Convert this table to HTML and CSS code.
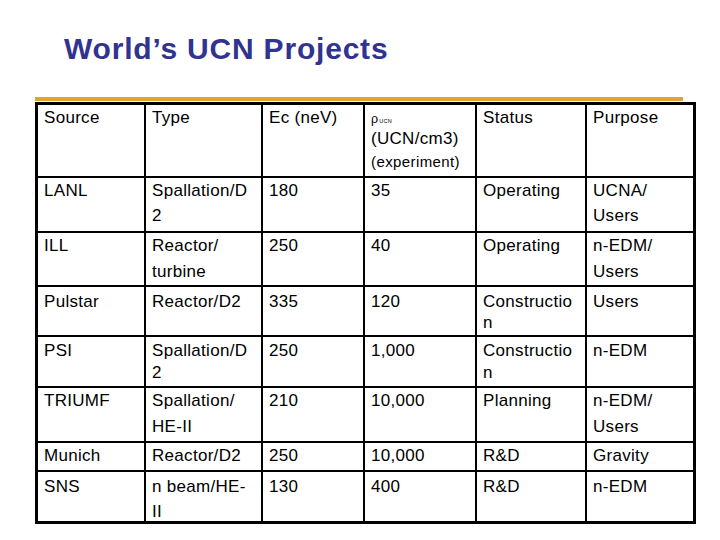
FILE: index.html
```html
<!DOCTYPE html>
<html>
<head>
<meta charset="utf-8">
<link rel="stylesheet" href="styles.css">
</head>
<body>
<div class="slide">
  <h1 class="title">World’s UCN Projects</h1>
  <div class="rule"></div>
  <div class="grid">
    <div class="row r-head">
      <div class="c">Source</div>
      <div class="c">Type</div>
      <div class="c">Ec (neV)</div>
      <div class="c">
        <div class="rl1"><span class="rho">ρ</span><span class="ucn">UCN</span></div>
        <div class="rl2">(UCN/cm3)</div>
        <div class="rl3">(experiment)</div>
      </div>
      <div class="c">Status</div>
      <div class="c">Purpose</div>
    </div>
    <div class="row r-lanl">
      <div class="c">LANL</div>
      <div class="c">Spallation/D<br>2</div>
      <div class="c">180</div>
      <div class="c">35</div>
      <div class="c">Operating</div>
      <div class="c">UCNA/<br>Users</div>
    </div>
    <div class="row r-ill">
      <div class="c">ILL</div>
      <div class="c">Reactor/<br>turbine</div>
      <div class="c">250</div>
      <div class="c">40</div>
      <div class="c">Operating</div>
      <div class="c">n-EDM/<br>Users</div>
    </div>
    <div class="row r-pulstar">
      <div class="c">Pulstar</div>
      <div class="c">Reactor/D2</div>
      <div class="c">335</div>
      <div class="c">120</div>
      <div class="c">Constructio<br>n</div>
      <div class="c">Users</div>
    </div>
    <div class="row r-psi">
      <div class="c">PSI</div>
      <div class="c">Spallation/D<br>2</div>
      <div class="c">250</div>
      <div class="c">1,000</div>
      <div class="c">Constructio<br>n</div>
      <div class="c">n-EDM</div>
    </div>
    <div class="row r-triumf">
      <div class="c">TRIUMF</div>
      <div class="c">Spallation/<br>HE-II</div>
      <div class="c">210</div>
      <div class="c">10,000</div>
      <div class="c">Planning</div>
      <div class="c">n-EDM/<br>Users</div>
    </div>
    <div class="row r-munich">
      <div class="c">Munich</div>
      <div class="c">Reactor/D2</div>
      <div class="c">250</div>
      <div class="c">10,000</div>
      <div class="c">R&amp;D</div>
      <div class="c">Gravity</div>
    </div>
    <div class="row r-sns">
      <div class="c">SNS</div>
      <div class="c">n beam/HE-<br>II</div>
      <div class="c">130</div>
      <div class="c">400</div>
      <div class="c">R&amp;D</div>
      <div class="c">n-EDM</div>
    </div>
  </div>
</div>
</body>
</html>
```
FILE: styles.css
```css
html, body {
  margin: 0;
  padding: 0;
  background: #ffffff;
}

.slide {
  width: 720px;
  height: 540px;
  overflow: hidden;
  font-family: "Liberation Sans", Arial, sans-serif;
  color: #000;
}

.title {
  margin: 34px 0 0 0;
  padding-left: 64px;
  font-size: 30px;
  line-height: 30px;
  font-weight: bold;
  letter-spacing: 0.8px;
  color: #30338f;
}

.rule {
  margin: 33px 0 0 35px;
  width: 648px;
  height: 4px;
  background: #e3a132;
}

.grid {
  margin: 1px 0 0 35px;
  display: grid;
  width: max-content;
  grid-template-columns: 106px 115px 100px 110px 108px 106px;
  grid-template-rows: 71px 53px 52px 48px 49px 53px 27px 49px;
  gap: 2px;
  background: #000;
  border: 3px solid #000;
}

.row {
  display: contents;
}

.c {
  background: #fff;
  padding-left: 6px;
  font-size: 17px;
  letter-spacing: 0.3px;
  white-space: nowrap;
  overflow: hidden;
}

.r-head .c   { padding-top: 2px; line-height: 22px; }
.r-lanl .c   { padding-top: 0; line-height: 25px; }
.r-ill .c    { padding-top: 0; line-height: 26px; }
.r-pulstar .c{ padding-top: 4px; line-height: 21px; }
.r-psi .c    { padding-top: 3px; line-height: 22px; }
.r-triumf .c { padding-top: 0; line-height: 26px; }
.r-munich .c { padding-top: 2px; line-height: 22px; }
.r-sns .c    { padding-top: 2px; line-height: 25px; }

.rl1 {
  line-height: 22px;
  height: 22px;
}

.rho {
  font-size: 12.5px;
  letter-spacing: 0;
}

.ucn {
  font-size: 5.5px;
  letter-spacing: 0.3px;
  margin-left: 1px;
}

.rl2 {
  line-height: 20px;
}

.rl3 {
  font-size: 15px;
  line-height: 26px;
  letter-spacing: 0.4px;
}
```
